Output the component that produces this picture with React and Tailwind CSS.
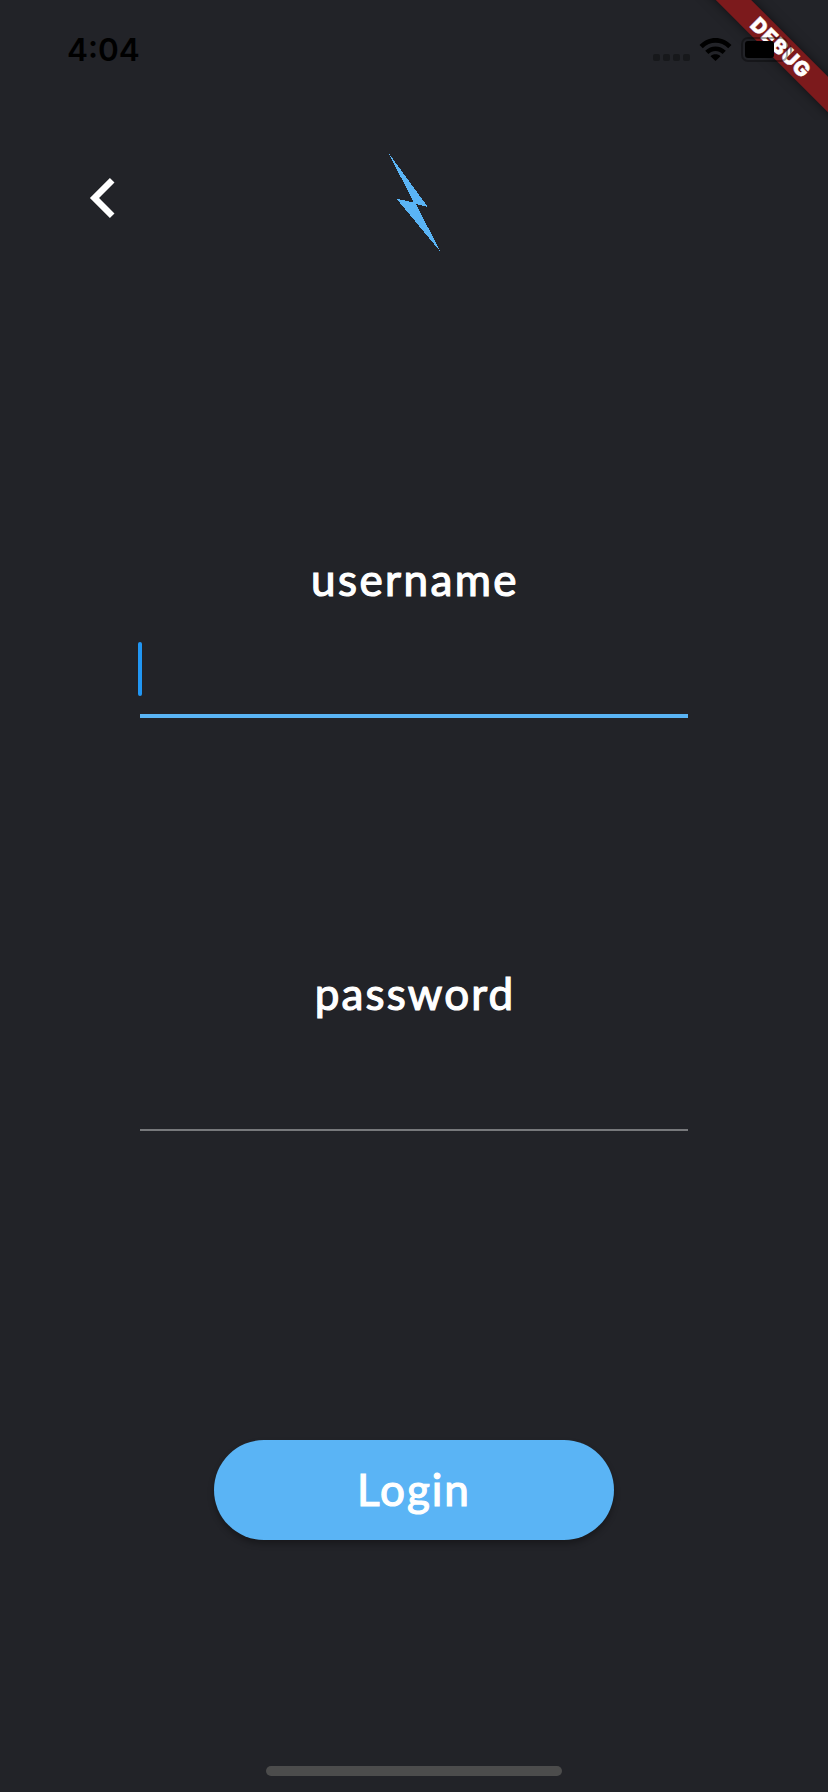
import React from "react";

function StatusBar() {
  return (
    <header className="relative flex h-[120px] w-full shrink-0 items-start justify-between overflow-hidden pl-[67px]">
      <div className="absolute left-[678px] top-[35px] flex h-[25px] w-[206px] rotate-45 items-center justify-center bg-[#7c1a1c] shadow-[0_0_12px_rgba(0,0,0,0.5)]">
        <span className="font-['Inter',sans-serif] text-[20.5px] font-black leading-6 tracking-[0.8px] text-white [-webkit-text-stroke:0.4px_white]">DEBUG</span>
      </div>
      <time className="relative mt-[30px] font-['Inter',sans-serif] text-[31.5px] font-semibold leading-10 text-black">4:04</time>
      <svg className="relative h-[120px] w-[190px]" viewBox="638 0 190 120" fill="none">
        <g fill="#17181b">
          <rect x="653" y="54" width="7" height="7" rx="2" />
          <rect x="663" y="54" width="7" height="7" rx="2" />
          <rect x="673" y="54" width="7" height="7" rx="2" />
          <rect x="683" y="54" width="7" height="7" rx="2" />
        </g>
        <g fill="#000">
          <path d="M715.5 61L710.5 56.2C713 53.7 718 53.7 720.5 56.2Z" />
          <path d="M705.2 50.8C711 45 720 45 725.8 50.8L722.6 54C718.5 50 712.5 50 708.4 54Z" />
          <path d="M699.5 45.1C708.5 35.6 722.5 35.6 731.5 45.1L728.2 48.3C721 41 710 41 702.8 48.3Z" />
        </g>
        <rect x="742" y="38" width="45" height="23" rx="6" stroke="#000" strokeOpacity="0.35" strokeWidth="2" />
        <path d="M790 45C793 46 793 53 790 54Z" fill="#000" fillOpacity="0.4" />
        <rect x="745" y="41" width="29" height="17" rx="3" fill="#000" />
      </svg>
    </header>
  );
}

function Field({ label, children }) {
  return (
    <label className="flex w-[548px] flex-col items-center font-['Lato','Noto_Sans',sans-serif] text-[44px] font-normal leading-[50px] text-white">
      {label}
      {children}
    </label>
  );
}

export default function App() {
  return (
    <main className="flex h-[1792px] w-[828px] flex-col items-center overflow-hidden bg-[#222328]">
      <StatusBar />
      <div className="grid h-[140px] w-full grid-cols-[1fr_52px_1fr] px-[90px] pt-[33px]">
        <svg className="mt-[25px] h-10 w-6 overflow-visible" viewBox="0 0 24 40" fill="none" stroke="#fff" strokeWidth="6.5">
          <path d="M22.2 2.3L4.5 20L22.2 37.7" />
        </svg>
        <svg className="h-[98px] w-[52px] overflow-visible" viewBox="388 153 52 98" fill="#5ab4f5" shapeRendering="crispEdges">
          <path d="M387.5 151.5L427.8 207L415.8 204L441 252.5L396.5 198.7L414 202.5Z" />
        </svg>
      </div>
      <div className="mt-[294px] h-[164px]">
        <Field label={<span className="-mr-0.5 tracking-[2.4px] [-webkit-text-stroke:1.2px_white]">username</span>}>
          <span className="flex h-[114px] w-full items-start border-b-4 border-[#5ab4f5]">
            <span className="-ml-0.5 mt-[38px] h-[54px] w-1 rounded-sm bg-[#2196f3]" />
          </span>
        </Field>
      </div>
      <div className="mt-[250px]">
        <Field label={<span className="-mr-0.5 tracking-[2.1px] [-webkit-text-stroke:1.2px_white]">password</span>}>
          <span className="h-[113px] w-full border-b-2 border-[#77787b]" />
        </Field>
      </div>
      <button className="mt-[309px] flex h-[100px] w-[400px] shrink-0 items-center justify-center rounded-full bg-[#5ab4f5] font-['Lato',sans-serif] text-[44px] font-normal leading-[56px] text-white shadow-[0_4px_6px_rgba(0,0,0,0.3)]">
        <span className="-mt-0.5 tracking-[2px] [-webkit-text-stroke:1.2px_white]">Login</span>
      </button>
      <div className="mt-[226px] h-2.5 w-[296px] shrink-0 rounded-full bg-[#4c4c4c]" />
    </main>
  );
}
